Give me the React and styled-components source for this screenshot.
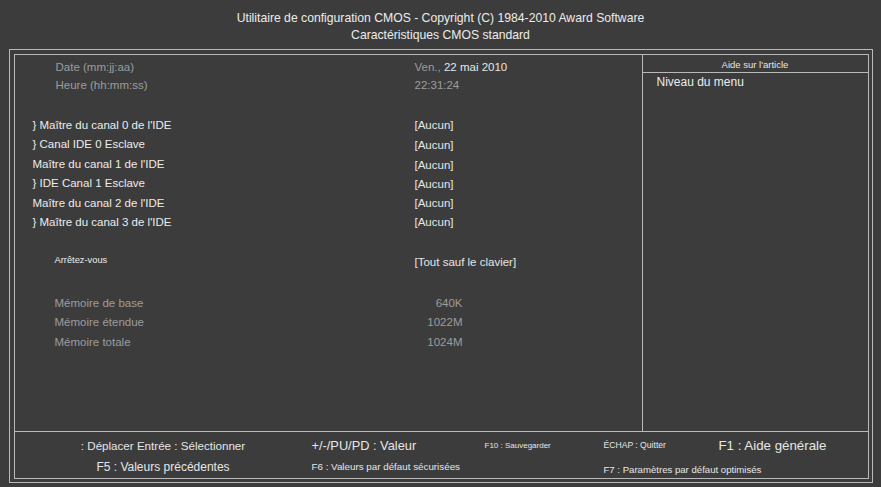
import React from "react";
import styled, { createGlobalStyle } from "styled-components";

const Global = createGlobalStyle`
  html, body { margin: 0; padding: 0; background: #3c3c3c; }
  body { font-family: "Liberation Sans", Arial, sans-serif; color: #e6e6e6; }
  * { box-sizing: border-box; }
`;

const Screen = styled.div`
  width: 881px;
  height: 487px;
  background: #3c3c3c;
  display: flex;
  flex-direction: column;
  overflow: hidden;
`;

const Header = styled.header`
  height: 49px;
  padding-top: 10px;
  text-align: center;
  font-size: 12.2px;
  line-height: 17px;
  color: #ececec;
`;

const Frame = styled.div`
  margin: 0 8px 0 9px;
  height: 434px;
  border: 1.5px solid #b9b9b9;
  padding: 3.5px;
`;

const Inner = styled.div`
  height: 100%;
  border: 1.5px solid #b9b9b9;
  display: flex;
  flex-direction: column;
`;

const Body = styled.div`
  flex: 1;
  display: grid;
  grid-template-columns: 628px 1fr;
`;

const Main = styled.section`
  border-right: 1.5px solid #b9b9b9;
  padding-top: 3.5px;
  display: flex;
  flex-direction: column;
`;

const Group = styled.div`
  margin-top: ${(p) => p.$gap || 0}px;
`;

const Row = styled.div`
  display: grid;
  grid-template-columns: 400px 70px auto;
  align-items: center;
  height: ${(p) => p.$h || 19.5}px;
  font-size: 11.5px;
`;

const Label = styled.span`
  padding-left: ${(p) => p.$indent}px;
  color: ${(p) => (p.$dim ? "#9c9c9c" : "#ececec")};
  font-size: ${(p) => p.$size || 11.5}px;
  white-space: nowrap;
`;

const Value = styled.span`
  grid-column: ${(p) => (p.$right ? "2" : "2 / 4")};
  text-align: ${(p) => (p.$right ? "right" : "left")};
  padding-right: ${(p) => (p.$right ? "22px" : "0")};
  color: ${(p) => (p.$dim ? "#9c9c9c" : "#e6e6e6")};
  font-size: ${(p) => p.$size || 11.5}px;
  white-space: nowrap;
  transform: translateY(${(p) => p.$dy || 0}px);
`;

const Dim = styled.span`
  color: #9c9c9c;
`;

const Help = styled.aside`
  display: flex;
  flex-direction: column;
`;

const HelpTitle = styled.div`
  height: 18px;
  border-bottom: 1.5px solid #b9b9b9;
  text-align: center;
  font-size: 9.5px;
  line-height: 20px;
  color: #e6e6e6;
`;

const HelpText = styled.div`
  padding: 1px 0 0 14px;
  font-size: 12px;
  line-height: 16px;
  color: #ececec;
`;

const Footer = styled.footer`
  height: 47px;
  border-top: 1.5px solid #b9b9b9;
  display: grid;
  grid-template-columns: 297px 173px 119px 115px 1fr;
  grid-template-rows: 23px 20px;
  align-items: center;
  padding-top: 2px;
`;

const Key = styled.span`
  grid-column: ${(p) => p.$col};
  text-align: ${(p) => (p.$center ? "center" : "left")};
  font-size: ${(p) => p.$size}px;
  color: #e6e6e6;
  white-space: nowrap;
  transform: translateY(${(p) => p.$dy || 0}px);
`;

const channels = [
  ["} Maître du canal 0 de l'IDE", 0],
  ["} Canal IDE 0 Esclave", 1],
  ["Maître du canal 1 de l'IDE", 1],
  ["} IDE Canal 1 Esclave", 1],
  ["Maître du canal 2 de l'IDE", 0],
  ["} Maître du canal 3 de l'IDE", 0],
];

const memory = [
  ["Mémoire de base", "640K"],
  ["Mémoire étendue", "1022M"],
  ["Mémoire totale", "1024M"],
];

export default function App() {
  return (
    <>
      <Global />
      <Screen>
        <Header>
          <div>Utilitaire de configuration CMOS - Copyright (C) 1984-2010 Award Software</div>
          <div>Caractéristiques CMOS standard</div>
        </Header>
        <Frame>
          <Inner>
            <Body>
              <Main>
                <Group>
                  <Row $h={18}>
                    <Label $indent={41} $dim>Date (mm:jj:aa)</Label>
                    <Value>
                      <Dim>Ven., </Dim>22 mai 2010
                    </Value>
                  </Row>
                  <Row $h={18}>
                    <Label $indent={41} $dim>Heure (hh:mm:ss)</Label>
                    <Value $dim>22:31:24</Value>
                  </Row>
                </Group>
                <Group $gap={21}>
                  {channels.map(([l, dy]) => (
                    <Row key={l}>
                      <Label $indent={18}>{l}</Label>
                      <Value $dy={dy}>[Aucun]</Value>
                    </Row>
                  ))}
                </Group>
                <Group $gap={18}>
                  <Row $h={20}>
                    <Label $indent={40} $size={9.3}>Arrêtez-vous</Label>
                    <Value $dy={2}>[Tout sauf le clavier]</Value>
                  </Row>
                </Group>
                <Group $gap={23}>
                  {memory.map(([l, v]) => (
                    <Row key={l}>
                      <Label $indent={40} $dim>{l}</Label>
                      <Value $right $dim>{v}</Value>
                    </Row>
                  ))}
                </Group>
              </Main>
              <Help>
                <HelpTitle>Aide sur l'article</HelpTitle>
                <HelpText>Niveau du menu</HelpText>
              </Help>
            </Body>
            <Footer>
              <Key $col={1} $center $size={11.6}>: Déplacer Entrée : Sélectionner</Key>
              <Key $col={2} $size={12.8}>+/-/PU/PD : Valeur</Key>
              <Key $col={3} $size={8}>F10 : Sauvegarder</Key>
              <Key $col={4} $size={8.6}>ÉCHAP : Quitter</Key>
              <Key $col={5} $size={13.3}>F1 : Aide générale</Key>
              <Key $col={1} $center $size={12}>F5 : Valeurs précédentes</Key>
              <Key $col="2 / 4" $size={9.8}>F6 : Valeurs par défaut sécurisées</Key>
              <Key $col="4 / 6" $size={9.6} $dy={3}>F7 : Paramètres par défaut optimisés</Key>
            </Footer>
          </Inner>
        </Frame>
      </Screen>
    </>
  );
}
